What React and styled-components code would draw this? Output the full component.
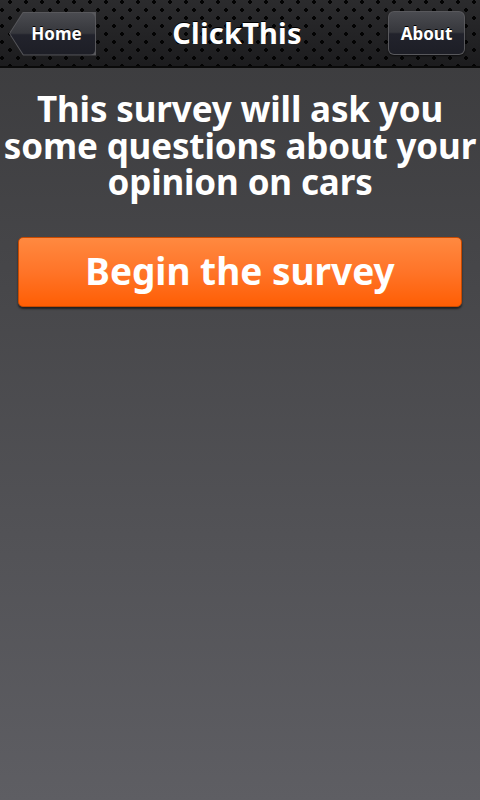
import React from 'react';
import styled, { createGlobalStyle } from 'styled-components';

const Global = createGlobalStyle`
  html, body { margin: 0; padding: 0; height: 100%; }
  body {
    font-family: "Noto Sans", "Open Sans", sans-serif;
    background: linear-gradient(180deg, #3a3a3c 0%, #5e5e63 100%);
  }
  #root { min-height: 100vh; }
`;

const Page = styled.div`
  display: flex;
  flex-direction: column;
  min-height: 800px;
  background: linear-gradient(180deg, #3a3a3c 0%, #5e5e63 100%);
`;

const Header = styled.header`
  height: 66px;
  border-bottom: 2px solid #0a0a0a;
  display: grid;
  grid-template-columns: 1fr auto 1fr;
  align-items: center;
  padding: 0 15px 0 9px;
  background-color: #1f1f21;
  background-image:
    radial-gradient(circle, #030303 1.7px, transparent 2.1px),
    radial-gradient(circle, #030303 1.7px, transparent 2.1px),
    linear-gradient(180deg, #2b2b2d 0%, #1c1c1e 100%);
  background-size: 16px 16px, 16px 16px, 100% 100%;
  background-position: 2px -6px, 10px 2px, 0 0;
`;

const Title = styled.h1`
  margin: 0 0 2px 0;
  color: #fff;
  font-size: 29px;
  font-weight: 700;
  letter-spacing: 0.2px;
  text-shadow: 0 -1px 0 #000;
`;

const NavShape = styled.a`
  display: flex;
  justify-self: ${p => (p.$back ? 'start' : 'end')};
  height: 44px;
  width: ${p => (p.$back ? '87px' : '77px')};
  margin-top: ${p => (p.$back ? '1px' : '0')};
  background: #58585c;
  border-radius: ${p => (p.$back ? '0' : '6px')};
  clip-path: ${p => (p.$back ? 'polygon(14px 0, 100% 0, 100% 100%, 14px 100%, 0 50%)' : 'none')};
  padding: 1px;
  box-sizing: border-box;
  box-shadow: 0 1px 2px rgba(0, 0, 0, 0.6);
  text-decoration: none;
`;

const NavInner = styled.span`
  flex: 1;
  display: flex;
  align-items: center;
  justify-content: center;
  padding-left: ${p => (p.$back ? '8px' : '0')};
  border-radius: ${p => (p.$back ? '0 5px 5px 0' : '5px')};
  clip-path: ${p => (p.$back ? 'polygon(13.5px 0, 100% 0, 100% 100%, 13.5px 100%, 0 50%)' : 'none')};
  background: linear-gradient(180deg, #4a4b50 0%, #36373c 48%, #22232c 52%, #1d1e26 100%);
  color: #fff;
  font-size: 17px;
  font-weight: 700;
  text-shadow: 0 -1px 0 #000;
`;

const Content = styled.main`
  display: flex;
  flex-direction: column;
  align-items: center;
  padding: 23px 18px 0 18px;
`;

const Intro = styled.p`
  margin: 0 -18px;
  color: #fff;
  font-size: 35px;
  font-weight: 700;
  line-height: 36.5px;
  letter-spacing: -0.15px;
  text-align: center;
`;

const BeginButton = styled.button`
  margin-top: 36px;
  width: 100%;
  height: 70px;
  border: 1px solid #c84a00;
  border-radius: 5px;
  background: linear-gradient(180deg, #ff8940 0%, #ff7428 50%, #ff5e04 100%);
  box-shadow: 0 2px 2px rgba(0, 0, 0, 0.55);
  color: #fff;
  font-family: inherit;
  font-size: 37px;
  font-weight: 700;
  cursor: pointer;
  padding: 0 0 2px 0;
`;

export default function App() {
  return (
    <>
      <Global />
      <Page>
        <Header>
          <NavShape $back href="#">
            <NavInner $back>Home</NavInner>
          </NavShape>
          <Title>ClickThis</Title>
          <NavShape href="#">
            <NavInner>About</NavInner>
          </NavShape>
        </Header>
        <Content>
          <Intro>This survey will ask you some questions about your opinion on cars</Intro>
          <BeginButton>Begin the survey</BeginButton>
        </Content>
      </Page>
    </>
  );
}
